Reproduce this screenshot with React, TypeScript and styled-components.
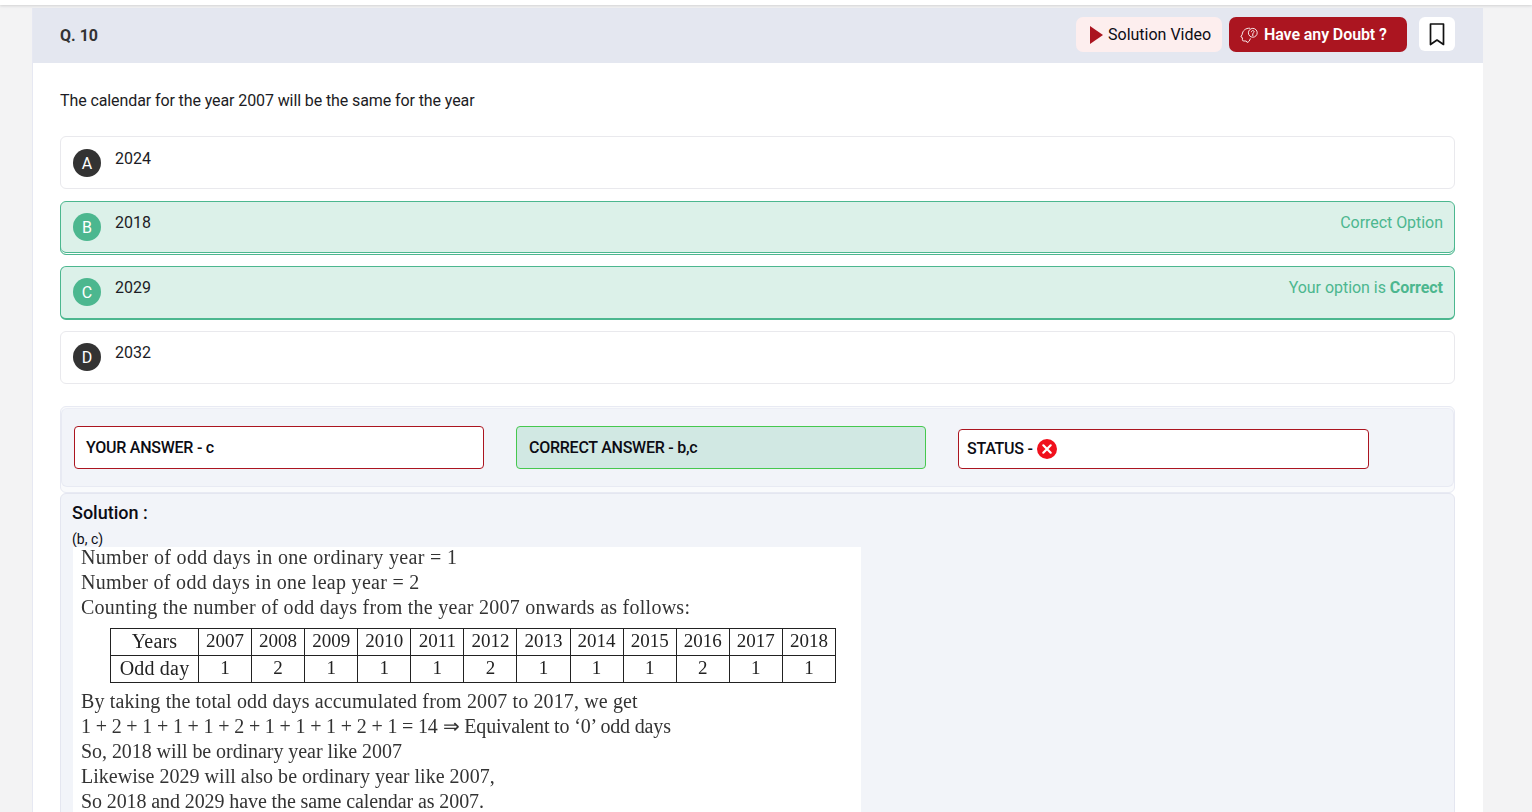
import React from "react";
import styled, { createGlobalStyle } from "styled-components";

const Global = createGlobalStyle`
  html, body { margin: 0; padding: 0; height: 812px; overflow: hidden; background: #f3f3f4; }
  * { box-sizing: border-box; }
  body { font-family: Roboto, "Liberation Sans", sans-serif; }
`;

const Page = styled.div`
  width: 1532px;
  height: 812px;
  overflow: hidden;
  background: #f3f3f4;
`;
const TopStrip = styled.div`
  height: 5px;
  background: #fff;
  box-shadow: 0 1px 3px rgba(0, 0, 0, 0.14);
  position: relative;
`;
const Card = styled.main`
  margin: 3px 48px 0 32px;
  width: 1451px;
  height: 804px;
  background: #fff;
  border-left: 1px solid #e6e8f2;
`;
const Header = styled.header`
  height: 55px;
  background: #e4e7f0;
  display: flex;
  align-items: center;
  padding: 0 28px 0 27px;
`;
const QNum = styled.div`
  font-size: 16px;
  font-weight: 700;
  color: #333;
  margin-right: auto;
`;
const VideoButton = styled.button`
  width: 146px;
  height: 35px;
  margin-top: -2px;
  border: 0;
  border-radius: 7px;
  background: #fdeeee;
  color: #0c0c14;
  font: 400 16px Roboto, sans-serif;
  display: flex;
  align-items: center;
  padding: 0 0 0 14px;
  gap: 5px;
`;
const DoubtButton = styled.button`
  width: 178px;
  height: 35px;
  margin: -2px 0 0 7px;
  border: 0;
  border-radius: 7px;
  background: #ab1520;
  color: #fff;
  font: 600 16px Roboto, sans-serif;
  letter-spacing: -0.1px;
  display: flex;
  align-items: center;
  padding: 0 0 0 11px;
  gap: 6px;
`;
const MarkButton = styled.button`
  width: 36px;
  height: 34px;
  margin: -3px 0 0 12px;
  border: 0;
  border-radius: 6px;
  background: #fff;
  display: flex;
  align-items: center;
  justify-content: center;
  padding: 0;
`;
const Body = styled.section`
  padding: 0 28px 0 27px;
`;
const Question = styled.p`
  margin: 0;
  height: 73px;
  padding-top: 28px;
  font-size: 16px;
  line-height: 19px;
  letter-spacing: -0.1px;
  color: #1c1c24;
`;
const Options = styled.div`
  display: flex;
  flex-direction: column;
  gap: 12px;
`;
const Option = styled.div<{ $state: "plain" | "double" | "thick" }>`
  height: ${(p) => (p.$state === "plain" ? 53 : 54)}px;
  margin-bottom: ${(p) => (p.$state === "plain" ? 0 : -1)}px;
  border-radius: 6px;
  border: 1px solid ${(p) => (p.$state === "plain" ? "#e9e9ed" : "#4cb78f")};
  border-bottom-width: ${(p) => (p.$state === "thick" ? 2 : 1)}px;
  background: ${(p) => (p.$state === "plain" ? "#fff" : "#dcf1e9")};
  box-shadow: ${(p) => (p.$state === "double" ? "inset 0 -1px 0 #fff, inset 0 -2px 0 #4cb78f" : "none")};
  padding: 11px 11px 0 12px;
  display: flex;
  align-items: flex-start;
  &:first-child {
    padding-top: 12px;
  }
`;
const Letter = styled.span<{ $right?: boolean }>`
  width: 28px;
  height: 28px;
  border-radius: 50%;
  background: ${(p) => (p.$right ? "#4cb78f" : "#333333")};
  color: #fff;
  font-size: 16px;
  font-weight: 400;
  display: flex;
  align-items: center;
  justify-content: center;
  flex: none;
`;
const OptionText = styled.span`
  margin: 0 0 0 14px;
  font-size: 16px;
  line-height: 19px;
  color: #1c1c24;
`;
const Verdict = styled.span`
  margin: 0 0 0 auto;
  font-size: 16px;
  line-height: 19px;
  letter-spacing: -0.04px;
  color: #4cb78f;
  b {
    font-weight: 700;
  }
`;
const Summary = styled.div`
  margin-top: 22px;
  height: 87px;
  border: 1px solid #e8eaf3;
  border-radius: 6px;
  background: #f9fafc;
  padding-top: 1px;
`;
const SummaryRow = styled.div`
  height: 79px;
  border: 1px solid #e8eaf3;
  border-top-color: #eceef6;
  border-radius: 6px;
  background: #f2f4f9;
  padding: 17px 0 0 12px;
  display: grid;
  grid-template-columns: 410px 410px 411px;
  column-gap: 32px;
  align-items: end;
  align-content: start;
`;
const AnswerBox = styled.div<{ $tone: "red" | "green"; $short?: boolean }>`
  height: ${(p) => (p.$short ? 40 : 43)}px;
  border-radius: 4px;
  border: 1px solid ${(p) => (p.$tone === "red" ? "#ab1520" : "#46c84f")};
  background: ${(p) => (p.$tone === "red" ? "#fff" : "#d1e8e3")};
  padding: 0 ${(p) => (p.$short ? 8 : p.$tone === "green" ? 12 : 11)}px;
  display: flex;
  align-items: center;
  gap: 4px;
  font-size: 16px;
  font-weight: 500;
  color: #0c0c14;
  letter-spacing: -0.25px;
`;
const StatusLabel = styled.span`
  margin-top: -2px;
`;
const Solution = styled.div`
  height: 340px;
  border: 1px solid #e4e6f0;
  border-radius: 6px;
  background: #f2f4f9;
  padding: 7px 0 0 11px;
`;
const SolutionTitle = styled.h3`
  margin: 0;
  font-size: 18px;
  line-height: 24px;
  font-weight: 500;
  color: #0c0c14;
`;
const AnswerKey = styled.div`
  margin-top: 7px;
  font-size: 14px;
  line-height: 15px;
  height: 15px;
  color: #0c0c14;
`;
const Scan = styled.div`
  width: 788px;
  height: 280px;
  margin-left: 1px;
  background: #fff;
  padding: 0 0 0 8px;
  font-family: "Liberation Serif", serif;
  font-size: 20px;
  color: #333;
  filter: blur(0.25px);
`;
const ScanLine = styled.div<{ $track: number }>`
  height: 25px;
  line-height: 20px;
  letter-spacing: ${(p) => p.$track}px;
  white-space: nowrap;
`;
const OddTable = styled.table`
  border-collapse: collapse;
  table-layout: fixed;
  width: 726px;
  height: 54px;
  margin: 6px 0 8px 29px;
  color: #222;
  font-size: 19px;
  col:first-child {
    width: 88px;
  }
  td {
    border: 1.5px solid #222;
    padding: 0 0 2px;
    text-align: center;
    height: 27px;
    line-height: 22px;
  }
  td:first-child {
    font-size: 20px;
    letter-spacing: 0.2px;
  }
`;

const years = [2007, 2008, 2009, 2010, 2011, 2012, 2013, 2014, 2015, 2016, 2017, 2018];
const odd = [1, 2, 1, 1, 1, 2, 1, 1, 1, 2, 1, 1];

const HeadDoubt = () => (
  <svg width="18" height="16" viewBox="0 0 18 16" fill="none" stroke="#fff" strokeWidth="0.9">
    <path
      d="M9.6 1.2C5.6 1 2.6 3.6 2.2 7.4L.9 9.8l1.5.9v2c0 .9.5 1.3 1.4 1.3h2.4l.9 1.4c1.6-.2 2.6-1.6 3.2-3.6"
      strokeLinecap="round"
      strokeLinejoin="round"
    />
    <circle cx="12.8" cy="5.8" r="4.4" />
    <path d="M11.4 4.8c.1-.9.8-1.2 1.4-1.2s1.4.4 1.4 1.1c0 .9-1.4 1-1.4 2" strokeLinecap="round" />
    <circle cx="12.8" cy="8" r="0.4" fill="#fff" />
  </svg>
);

const Play = () => (
  <svg width="13" height="18" viewBox="0 0 13 18">
    <path d="M0 0 L13 9 L0 18 Z" fill="#ab1520" />
  </svg>
);

const BookmarkIcon = () => (
  <svg width="16" height="23" viewBox="0 0 16 23" fill="none" stroke="#111" strokeWidth="1.7" strokeLinejoin="round">
    <path d="M1.5 1h13v20.5L8 17 1.5 21.5z" />
  </svg>
);

const Cross = () => (
  <svg width="20" height="20" viewBox="0 0 20 20">
    <circle cx="10" cy="10" r="10" fill="#f0101c" />
    <path d="M6.3 6.3l7.4 7.4M13.7 6.3l-7.4 7.4" stroke="#fff" strokeWidth="2.2" strokeLinecap="round" />
  </svg>
);

export default function App() {
  return (
    <Page>
      <Global />
      <TopStrip />
      <Card>
        <Header>
          <QNum>Q. 10</QNum>
          <VideoButton>
            <Play />
            Solution Video
          </VideoButton>
          <DoubtButton>
            <HeadDoubt />
            Have any Doubt ?
          </DoubtButton>
          <MarkButton aria-label="Bookmark">
            <BookmarkIcon />
          </MarkButton>
        </Header>
        <Body>
          <Question>The calendar for the year 2007 will be the same for the year</Question>
          <Options>
            <Option $state="plain">
              <Letter>A</Letter>
              <OptionText>2024</OptionText>
            </Option>
            <Option $state="double">
              <Letter $right>B</Letter>
              <OptionText>2018</OptionText>
              <Verdict>Correct Option</Verdict>
            </Option>
            <Option $state="thick">
              <Letter $right>C</Letter>
              <OptionText>2029</OptionText>
              <Verdict>
                Your option is <b>Correct</b>
              </Verdict>
            </Option>
            <Option $state="plain">
              <Letter>D</Letter>
              <OptionText>2032</OptionText>
            </Option>
          </Options>
          <Summary>
            <SummaryRow>
              <AnswerBox $tone="red">YOUR ANSWER - c</AnswerBox>
              <AnswerBox $tone="green">CORRECT ANSWER - b,c</AnswerBox>
              <AnswerBox $tone="red" $short>
                <StatusLabel>STATUS -</StatusLabel> <Cross />
              </AnswerBox>
            </SummaryRow>
          </Summary>
          <Solution>
            <SolutionTitle>Solution :</SolutionTitle>
            <AnswerKey>(b, c)</AnswerKey>
            <Scan>
              <ScanLine $track={0.34}>Number of odd days in one ordinary year = 1</ScanLine>
              <ScanLine $track={0.29}>Number of odd days in one leap year = 2</ScanLine>
              <ScanLine $track={0.26}>Counting the number of odd days from the year 2007 onwards as follows:</ScanLine>
              <OddTable>
                <colgroup>
                  <col />
                  {years.map((y) => (
                    <col key={y} />
                  ))}
                </colgroup>
                <tbody>
                  <tr>
                    <td>Years</td>
                    {years.map((y) => (
                      <td key={y}>{y}</td>
                    ))}
                  </tr>
                  <tr>
                    <td>Odd day</td>
                    {odd.map((n, i) => (
                      <td key={i}>{n}</td>
                    ))}
                  </tr>
                </tbody>
              </OddTable>
              <ScanLine $track={0.13}>By taking the total odd days accumulated from 2007 to 2017, we get</ScanLine>
              <ScanLine $track={-0.16}>1 + 2 + 1 + 1 + 1 + 2 + 1 + 1 + 1 + 2 + 1 = 14 ⇒ Equivalent to ‘0’ odd days</ScanLine>
              <ScanLine $track={-0.06}>So, 2018 will be ordinary year like 2007</ScanLine>
              <ScanLine $track={0.02}>Likewise 2029 will also be ordinary year like 2007,</ScanLine>
              <ScanLine $track={-0.1}>So 2018 and 2029 have the same calendar as 2007.</ScanLine>
            </Scan>
          </Solution>
        </Body>
      </Card>
    </Page>
  );
}
